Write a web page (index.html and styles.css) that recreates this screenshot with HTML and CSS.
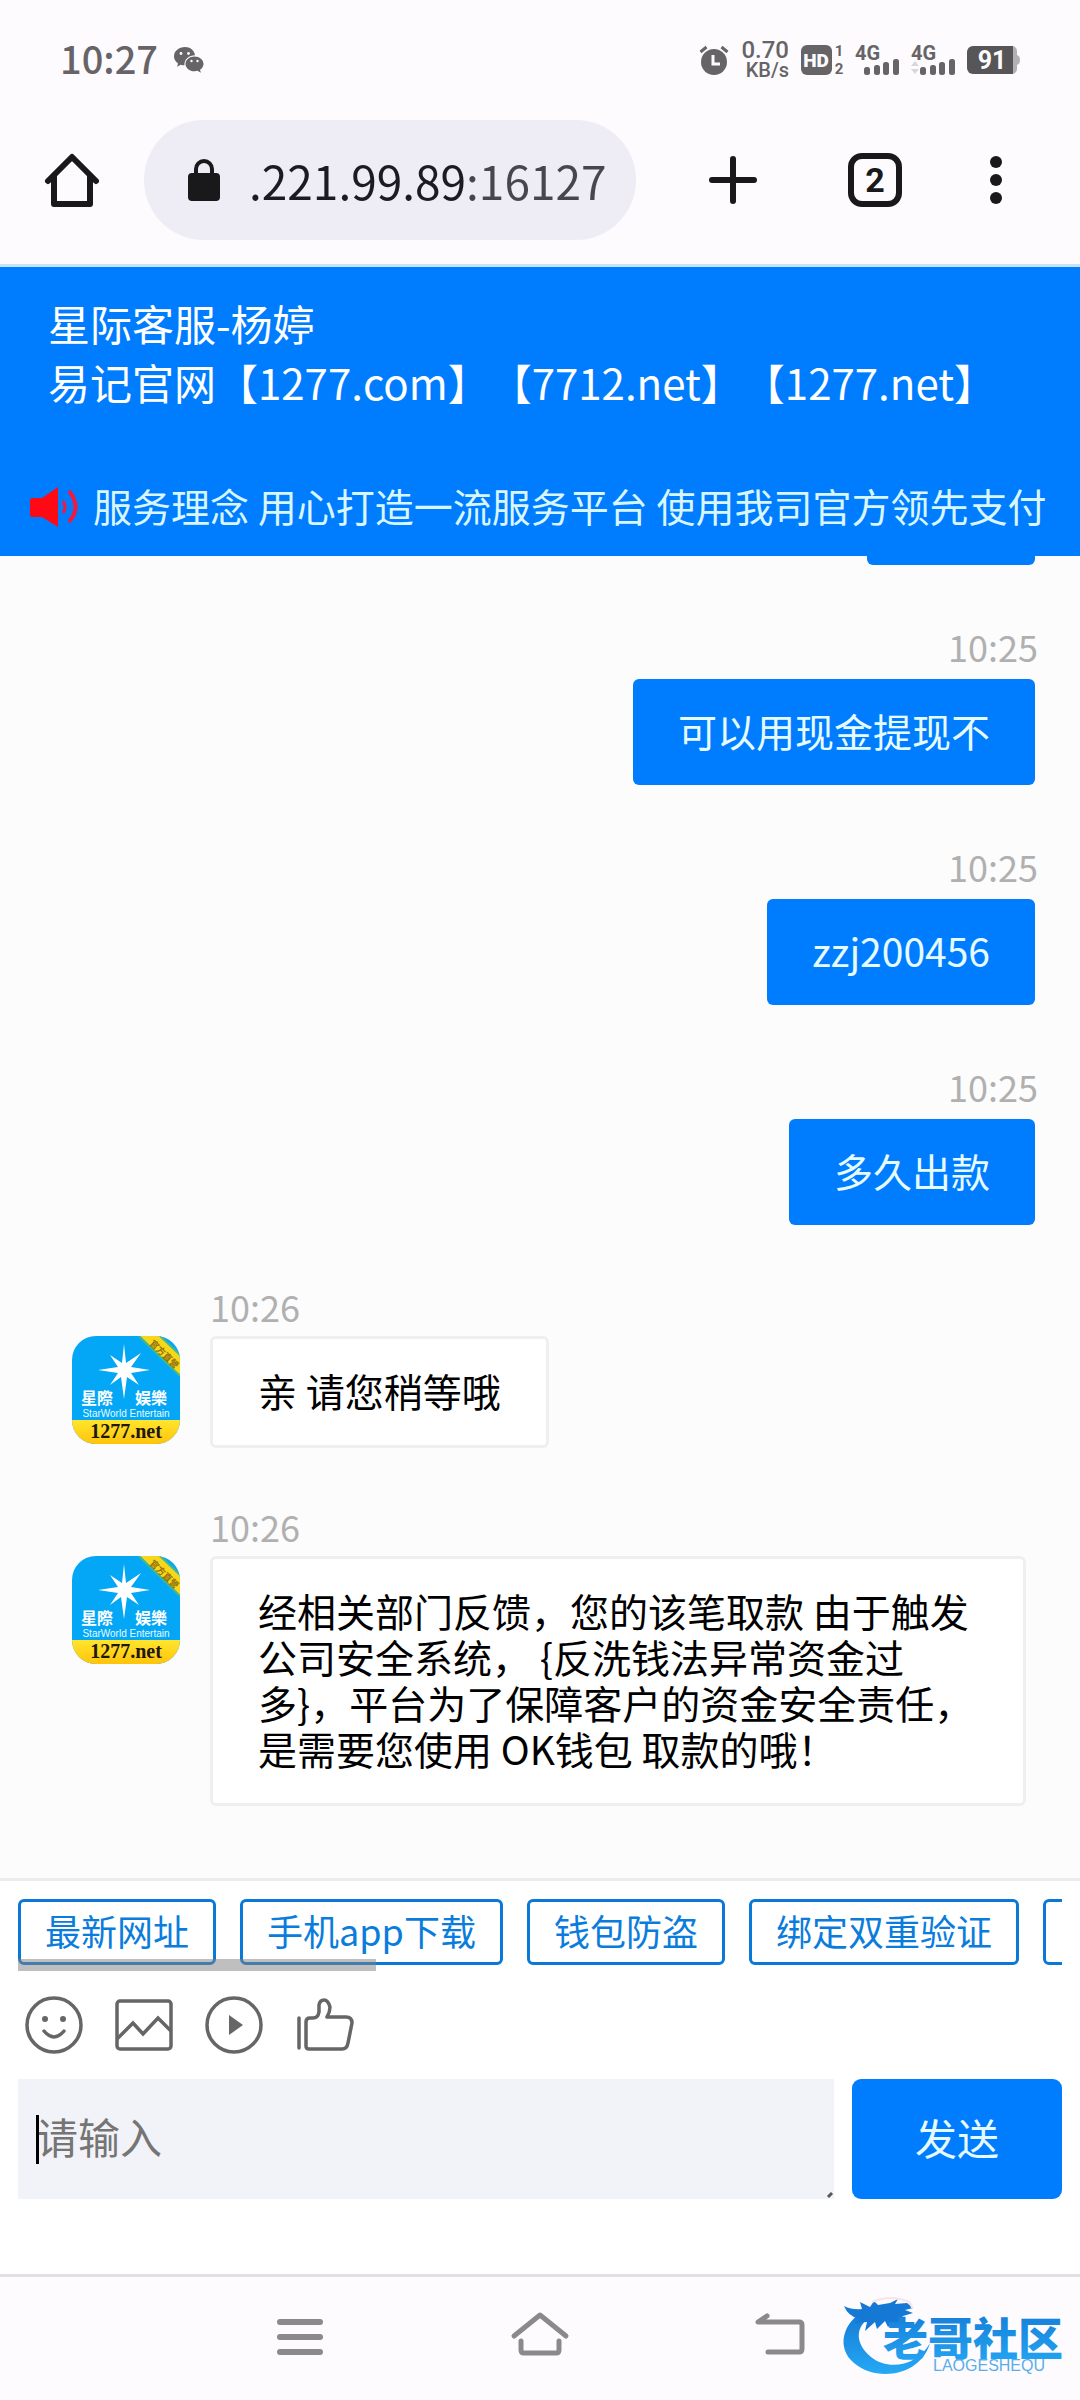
FILE: index.html
```html
<!DOCTYPE html>
<html lang="zh-CN">
<head>
  <meta charset="UTF-8"/>
  <meta name="viewport" content="width=device-width, initial-scale=1"/>
  <title>在线客服</title>
  <link rel="stylesheet" href="styles.css">
</head>
<body>

  <!-- Phone status bar -->
  <div class="status-bar">
    <span class="clock">10:27</span>
    <svg class="wechat" width="30" height="26" viewBox="0 0 30 26">
      <path fill="#666467" d="M11 0C5 0 0 4 0 9.300c0 3 1.500 5.400 4 7l-.8 3.400 3.600-2c1.200.4 2.300.5 3.600.5C10.200 12 15 8.200 21 8.200 20.500 3.500 16 0 11 0z"/>
      <path fill="#666467" d="M20.500 9.500c-5 0-9 3.400-9 7.400s4 7.400 9 7.400c1.100 0 2-.2 3-.5l3.400 2-.9-3c2.100-1.400 3.500-3.500 3.500-5.900 0-4-4-7.400-9-7.400z"/>
      <g fill="#fdfbfe"><circle cx="7" cy="6.500" r="1.400"/><circle cx="14.500" cy="6.500" r="1.400"/><circle cx="17.500" cy="14" r="1.200"/><circle cx="23.500" cy="14" r="1.200"/></g>
    </svg>
    <div class="status-right">
      <svg width="30" height="30" viewBox="0 0 30 30">
        <circle cx="15" cy="17" r="13" fill="#666467"/>
        <path d="M1.500 7l6-5M28.500 7l-6-5" stroke="#666467" stroke-width="3" fill="none"/>
        <path d="M14 10v9h7" stroke="#fdfbfe" stroke-width="3" fill="none"/>
      </svg>
      <div class="net-speed"><span class="net-value">0.70</span><span>KB/s</span></div>
      <svg width="42" height="30" viewBox="0 0 42 30">
        <rect width="31" height="30" rx="6" fill="#666467"/>
        <text class="hd-text" x="15" y="22" text-anchor="middle" fill="#fdfbfe">HD</text>
        <text class="sim-text" x="38" y="11" text-anchor="middle" fill="#666467">1</text>
        <text class="sim-text" x="38" y="29" text-anchor="middle" fill="#666467">2</text>
      </svg>
      <svg width="44" height="30" viewBox="0 0 44 30">
        <text class="signal-text" x="0" y="15" fill="#666467">4G</text>
        <g fill="#666467"><rect x="9" y="22" width="6" height="8" rx="2.500"/><rect x="19" y="20" width="6" height="10" rx="2.500"/><rect x="28" y="17" width="6" height="13" rx="2.500"/><rect x="38" y="14" width="6" height="16" rx="2.500"/></g>
      </svg>
      <svg width="44" height="30" viewBox="0 0 44 30">
        <text class="signal-text" x="0" y="15" fill="#666467">4G</text>
        <path d="M0 21l4-5 4 5zM0 24l4 5 4-5z" fill="#d8d6d9"/>
        <g fill="#666467"><rect x="9" y="22" width="6" height="8" rx="2.500"/><rect x="19" y="20" width="6" height="10" rx="2.500"/><rect x="28" y="17" width="6" height="13" rx="2.500"/><rect x="38" y="14" width="6" height="16" rx="2.500"/></g>
      </svg>
      <svg width="52" height="28" viewBox="0 0 52 28">
        <path d="M40 0h5a5 5 0 0 1 5 5v4q3 1 3 5t-3 5v4a5 5 0 0 1-5 5h-5z" fill="#b3b1b4"/>
        <path d="M6 0h40v28H6a6 6 0 0 1-6-6V6a6 6 0 0 1 6-6z" fill="#565557"/>
        <text class="battery-text" x="25" y="23" text-anchor="middle" fill="#fdfbfe">91</text>
      </svg>
    </div>
  </div>

  <!-- Browser toolbar -->
  <div class="toolbar">
    <button class="tool-btn" type="button" aria-label="主页">
      <svg width="54" height="54" viewBox="0 0 54 54" fill="none" stroke="#19191c" stroke-width="6" stroke-linecap="round" stroke-linejoin="round">
        <path d="M3 28L27 4l24 24"/><path d="M9 24v27h36V24" />
      </svg>
    </button>
    <label class="address">
      <svg width="34" height="44" viewBox="0 0 34 44">
        <rect x="1" y="15" width="32" height="28" rx="4" fill="#19191c"/>
        <path d="M9 17v-6a8 8 0 0 1 16 0v6" fill="none" stroke="#19191c" stroke-width="4"/>
      </svg>
      <input class="address-input" type="text" value=".221.99.89:16127" aria-label="网址">
    </label>
    <div class="toolbar-right">
      <button class="tool-btn" type="button" aria-label="新标签页">
        <svg width="54" height="54" viewBox="0 0 54 54" stroke="#19191c" stroke-width="6" stroke-linecap="round"><path d="M27 6v42M6 27h42"/></svg>
      </button>
      <button class="tool-btn tabs" type="button">2</button>
      <button class="tool-btn more" type="button" aria-label="更多">
        <svg width="12" height="54" viewBox="0 0 12 54" fill="#19191c"><circle cx="6" cy="9" r="6"/><circle cx="6" cy="27" r="6"/><circle cx="6" cy="45" r="6"/></svg>
      </button>
    </div>
  </div>

  <header class="header">
    <div class="title">
      <div>星际客服-杨婷</div>
      <div>易记官网【1277.com】【7712.net】【1277.net】</div>
    </div>
    <div class="notice">
      <svg width="48" height="42" viewBox="0 0 48 42">
        <path d="M2 12h10L28 1v40L12 31H2q-2 0-2-2V14q0-2 2-2z" fill="#ff0a14"/>
        <path d="M33 15q4 6 0 12" fill="none" stroke="#f21a3c" stroke-width="3"/>
        <path d="M39 5q13 16 0 31" fill="none" stroke="#f21a3c" stroke-width="4"/>
      </svg>
      <span>服务理念 用心打造一流服务平台 使用我司官方领先支付</span>
    </div>
  </header>

  <!-- Messages -->
  <main class="chat">
    <div class="message me">
      <div class="bubble short"></div>
    </div>
    <div class="message me">
      <div class="time">10:25</div>
      <div class="bubble">可以用现金提现不</div>
    </div>
    <div class="message me">
      <div class="time">10:25</div>
      <div class="bubble">zzj200456</div>
    </div>
    <div class="message me">
      <div class="time">10:25</div>
      <div class="bubble">多久出款</div>
    </div>
    <div class="message agent">
      <svg class="avatar" width="108" height="108" viewBox="0 0 108 108">
        <defs>
          <clipPath id="round"><rect width="108" height="108" rx="24"/></clipPath>
          <linearGradient id="gold" x1="0" y1="0" x2="0" y2="1"><stop offset="0" stop-color="#ffe52e"/><stop offset="1" stop-color="#ffc40a"/></linearGradient>
          <g id="logo" clip-path="url(#round)">
            <rect width="108" height="108" fill="#03a7f6"/>
            <path d="M68 0h20l20 19v21z" fill="#f8d61a"/>
            <path d="M67 0l41 40M88 0l20 19" stroke="#45b98c" stroke-width="2"/>
            <text class="logo-ribbon" transform="translate(77 8) rotate(44)" fill="#94700f">官方直營</text>
            <path d="M52 8l2 19 15-10-10 14 19 3-19 3 8 12-12-8-3 22-3-22-11 8 8-12-20-3 20-3-8-12 12 8z" fill="#fff"/>
            <circle cx="52" cy="34" r="6" fill="#fff"/>
            <text class="logo-name" x="9" y="68" fill="#fff">星際</text>
            <text class="logo-name" x="63" y="68" fill="#fff">娱樂</text>
            <text class="logo-en" x="54" y="81" text-anchor="middle" fill="#e8faff">StarWorld Entertain</text>
            <rect y="84" width="108" height="24" fill="url(#gold)"/>
            <text class="logo-site" x="54" y="102" text-anchor="middle" fill="#20170a">1277.net</text>
          </g>
        </defs>
        <use href="#logo"/>
      </svg>
      <div class="message-body">
        <div class="time">10:26</div>
        <div class="bubble">亲 请您稍等哦</div>
      </div>
    </div>
    <div class="message agent">
      <svg class="avatar" width="108" height="108" viewBox="0 0 108 108"><use href="#logo"/></svg>
      <div class="message-body">
        <div class="time">10:26</div>
        <div class="bubble">经相关部门反馈，您的该笔取款 由于触发公司安全系统， {反洗钱法异常资金过多}，平台为了保障客户的资金安全责任，是需要您使用 OK钱包 取款的哦！</div>
      </div>
    </div>
  </main>

  <!-- Quick links and input -->
  <form class="composer">
    <div class="quick">
      <button type="button">最新网址</button>
      <button type="button">手机app下载</button>
      <button type="button">钱包防盗</button>
      <button type="button">绑定双重验证</button>
      <button type="button" aria-label="更多链接"></button>
    </div>
    <div class="tools">
      <button type="button" aria-label="表情">
        <svg width="60" height="60" viewBox="0 0 60 60" fill="none" stroke="#666" stroke-width="3.500" stroke-linecap="round"><circle cx="30" cy="30" r="27"/><path d="M20 36q10 12 20 0"/><circle cx="21" cy="24" r="3" fill="#666" stroke="none"/><circle cx="39" cy="24" r="3" fill="#666" stroke="none"/></svg>
      </button>
      <button type="button" aria-label="图片">
        <svg width="60" height="60" viewBox="0 0 60 60" fill="none" stroke="#666" stroke-width="3.500"><rect x="3" y="6" width="54" height="48" rx="3"/><path d="M3 44l16-16 10 11 15-16 13 13"/></svg>
      </button>
      <button type="button" aria-label="视频">
        <svg width="60" height="60" viewBox="0 0 60 60" fill="none" stroke="#666" stroke-width="3.500"><circle cx="30" cy="30" r="27"/><path d="M25 20v20l14-10z" fill="#666" stroke="none"/></svg>
      </button>
      <button type="button" aria-label="评价">
        <svg width="60" height="60" viewBox="0 0 60 60" fill="none" stroke="#666" stroke-width="3.500" stroke-linecap="round" stroke-linejoin="round"><path d="M5 23v30"/><path d="M12 27q0-4 4-4h3q5 0 6-6V10q1-5 5-5t6 7q0 5-3 10h19q6 0 6 6l-4 20q-1 6-6 6H15q-3 0-3-3z"/></svg>
      </button>
    </div>
    <div class="input-row">
      <div class="input-wrap">
        <textarea placeholder="请输入" aria-label="消息"></textarea>
        <span class="caret"></span>
        <svg class="grip" width="6" height="6" viewBox="0 0 6 6"><path d="M1 5l4-4" stroke="#555" stroke-width="3"/></svg>
      </div>
      <button class="send" type="submit">发送</button>
    </div>
  </form>

  <nav class="nav">
    <button type="button" aria-label="菜单">
      <svg width="60" height="60" viewBox="0 0 60 60" stroke="#8a898b" stroke-width="6" stroke-linecap="round"><path d="M10 18h40M10 33h40M10 48h40"/></svg>
    </button>
    <button type="button" aria-label="桌面">
      <svg width="60" height="60" viewBox="0 0 60 60" fill="none" stroke="#8a898b" stroke-width="5" stroke-linecap="round" stroke-linejoin="round"><path d="M4 32l26-21 26 21"/><path d="M11 37v9q0 3 3 3h32q3 0 3-3v-9"/></svg>
    </button>
    <button type="button" aria-label="返回">
      <svg width="60" height="60" viewBox="0 0 60 60" fill="none" stroke="#8a898b" stroke-width="5" stroke-linecap="round" stroke-linejoin="round"><path d="M17 12l-9 6h41q3 0 3 3v24q0 3-3 3H18"/></svg>
    </button>
    <svg class="community" width="224" height="84" viewBox="0 0 224 84">
      <defs><linearGradient id="wave" x1="0" y1="0" x2="0" y2="1"><stop offset="0" stop-color="#1478d4"/><stop offset="1" stop-color="#25a9f5"/></linearGradient></defs>
      <path d="M24 14C0 26-6 52 12 67c22 19 66 14 76-20-12 23-42 28-59 14C12 47 12 28 34 18z" fill="url(#wave)"/>
      <path d="M2 10q8 4 18 3l-2-7 10 5 4-6 4 4 12-2 8-4-3 5 12-1 6 5-8 2 8 3-10 3-4 4 6 3-11-1-6 5-3-6-8 8-2-7-10 9 2-9-12 1 4-4Q6 20 2 10z" fill="#1478d4"/>
      <path d="M30 6Q44 0 58 3q12 2 12 9" fill="none" stroke="#f5e4ea" stroke-width="2"/>
      <text class="community-name" x="41" y="60" fill="url(#wave)">老哥社区</text>
      <text class="community-en" x="91" y="75" fill="#5aaee8">LAOGESHEQU</text>
    </svg>
  </nav>

</body>
</html>
```

FILE: styles.css
```css
* {
  box-sizing: border-box;
}
body {
  margin: 0;
  height: 100vh;
  display: flex;
  flex-direction: column;
  background: #fcfcfc;
  font-family: "Noto Sans CJK SC", sans-serif;
  text-spacing-trim: space-all;
  overflow: hidden;
}
button, input, textarea {
  font-family: inherit;
  margin: 0;
  padding: 0;
  border: none;
  background: none;
}
button {
  cursor: pointer;
}
svg {
  display: block;
  flex: none;
  overflow: visible;
}

/* status bar */
.status-bar {
  display: flex;
  align-items: center;
  height: 120px;
  padding: 0 61px 0 60px;
  background: #fdfbfe;
  color: #666467;
  font-family: Roboto, sans-serif;
}
.clock {
  font-family: "Noto Sans CJK SC", sans-serif;
  font-size: 38px;
  line-height: 40px;
  font-weight: 500;
  padding-bottom: 4px;
}
.wechat {
  margin-left: 16px;
}
.status-right {
  display: flex;
  align-items: center;
  gap: 12px;
  margin-left: auto;
}
.net-speed {
  display: flex;
  flex-direction: column;
  align-items: flex-end;
  font-size: 20px;
  line-height: 20px;
  font-weight: 500;
}
.net-value {
  font-size: 24px;
}
.hd-text {
  font-size: 19px;
  font-weight: 900;
}
.sim-text {
  font-size: 15px;
  font-weight: 700;
}
.signal-text {
  font-size: 20px;
  font-weight: 700;
}
.battery-text {
  font-size: 25px;
  font-weight: 700;
}

/* browser toolbar */
.toolbar {
  display: flex;
  align-items: center;
  height: 147px;
  padding: 0 78px 24px 45px;
  background: #fdfbfe;
  border-bottom: 3px solid #c5e6f8;
}
.tool-btn {
  flex: none;
  width: 54px;
  height: 54px;
}
.address {
  flex: 1;
  min-width: 0;
  display: flex;
  align-items: center;
  gap: 28px;
  height: 120px;
  margin-left: 45px;
  padding: 0 20px 0 43px;
  border-radius: 60px;
  background: #eeecf5;
}
.address-input {
  flex: 1;
  min-width: 0;
  font-size: 46px;
  color: transparent;
  background: linear-gradient(90deg, #1b1b22 60%, #47464f 60%);
  background-clip: text;
  -webkit-background-clip: text;
}
.toolbar-right {
  display: flex;
  gap: 88px;
  margin-left: 70px;
}
.tabs {
  border: 6px solid #19191c;
  border-radius: 14px;
  font-family: Roboto, sans-serif;
  font-size: 34px;
  font-weight: 700;
  color: #19191c;
}
.more {
  width: 12px;
}

/* chat header */
.header {
  padding: 26px 20px 20px 30px;
  background: #007dff;
  color: #fff;
}
.title {
  margin-left: 18px;
  font-size: 42px;
  line-height: 59px;
}
.notice {
  display: flex;
  align-items: center;
  gap: 15px;
  margin-top: 67px;
  font-size: 39px;
  line-height: 54px;
  color: #d8f6ff;
  white-space: nowrap;
}
.notice span {
  padding-bottom: 4px;
}

/* messages */
.chat {
  flex: 1;
  min-height: 0;
  display: flex;
  flex-direction: column;
  justify-content: flex-end;
  gap: 60px;
  padding: 0 45px 72px 72px;
  overflow: hidden;
}
.message {
  display: flex;
}
.me {
  flex-direction: column;
  align-items: flex-end;
}
.agent {
  align-items: flex-start;
  gap: 30px;
  padding-right: 9px;
}
.avatar {
  margin-top: 48px;
}
.time {
  margin-bottom: 12px;
  font-size: 36px;
  line-height: 36px;
  color: #b0b0b0;
}
.bubble {
  width: fit-content;
  padding: 28px 45px 32px;
  border-radius: 6px;
  font-size: 39px;
  line-height: 46px;
}
.me .time {
  margin-right: -3px;
}
.me .bubble {
  margin: 3px 0;
  background: #007dff;
  color: #e6fbff;
}
.me .short {
  width: 168px;
}
.agent .bubble {
  border: 3px solid #efefef;
  background: #fff;
  color: #000;
}

/* composer */
.composer {
  padding: 18px 18px 75px;
  border-top: 3px solid #ececec;
  background: #fff;
}
.quick {
  position: relative;
  display: flex;
  gap: 24px;
  overflow: hidden;
  margin-bottom: 24px;
  padding-bottom: 6px;
}
.quick::after {
  content: "";
  position: absolute;
  left: 0;
  bottom: 0;
  width: 358px;
  height: 12px;
  background: rgba(128, 128, 128, 0.5);
}
.quick button {
  flex: none;
  height: 66px;
  padding: 0 24px 4px;
  border: 3px solid #0a78d6;
  border-radius: 6px;
  font-size: 36px;
  line-height: 54px;
  color: #0a7ddc;
}
.tools {
  display: flex;
  gap: 30px;
  padding-left: 6px;
  margin-bottom: 24px;
}
.input-row {
  display: flex;
  gap: 18px;
}
.input-wrap {
  position: relative;
  flex: 1;
}
textarea {
  display: block;
  width: 100%;
  height: 120px;
  padding: 27px 18px 33px;
  background: #f2f3f8;
  font-size: 42px;
  line-height: 60px;
  resize: none;
}
textarea::placeholder {
  color: #757575;
}
.caret {
  position: absolute;
  left: 18px;
  top: 36px;
  width: 3px;
  height: 49px;
  background: #000;
}
.grip {
  position: absolute;
  right: 1px;
  bottom: 1px;
}
.send {
  width: 210px;
  padding-bottom: 5px;
  border-radius: 9px;
  background: #007dff;
  font-size: 42px;
  color: #e6fbff;
}

/* phone navigation */
.nav {
  position: relative;
  display: flex;
  justify-content: center;
  gap: 180px;
  height: 126px;
  padding-top: 27px;
  border-top: 3px solid #e2e0e4;
  background: #fdfbfe;
}
.nav button {
  width: 60px;
  height: 60px;
}
.community {
  position: absolute;
  right: 14px;
  bottom: 20px;
}
.community-name {
  font-size: 45px;
  font-weight: 900;
}
.community-en {
  font-family: "Liberation Sans", sans-serif;
  font-size: 16px;
}

/* avatar lettering */
.logo-ribbon {
  font-size: 9px;
  font-weight: 700;
}
.logo-name {
  font-size: 16px;
  font-weight: 700;
}
.logo-en {
  font-family: "Liberation Sans", sans-serif;
  font-size: 10px;
}
.logo-site {
  font-family: "Liberation Serif", serif;
  font-size: 20px;
  font-weight: 700;
}
```
